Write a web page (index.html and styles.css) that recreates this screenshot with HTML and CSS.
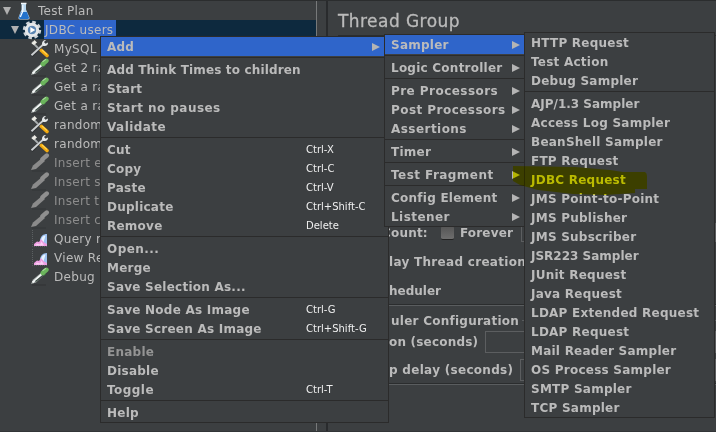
FILE: index.html
```
<!DOCTYPE html>
<html lang="en">
<head>
<meta charset="utf-8">
<title>Test Plan</title>
<link rel="stylesheet" href="styles.css">
</head>
<body>
<svg class="defs" width="0" height="0">
  <defs>
    <symbol id="tools" viewBox="0 0 20 19">
      <path d="M2 3l8 8" stroke="#a9adaf" stroke-width="1.800"/>
      <path d="M1.500 4.500L4.500 1l2.500 2.500-3 2.500z" fill="#ecebe4"/>
      <path d="M1.500 17L14 5" stroke="#2e3133" stroke-width="3"/>
      <path d="M1.500 16.200L14 4.800" stroke="#cdd0d2" stroke-width="1.900"/>
      <path d="M12.500 6.500c-1.500-3.500 1-5.500 3.500-5.500l-2 2 1.500 1.700 2.500-1.200c.3 3-2.500 4.500-5.500 3z" fill="#e6e8e9"/>
      <path d="M11.500 11.500l5.500 5" stroke="#f2a90e" stroke-width="3.600" stroke-linecap="round"/>
      <path d="M12 11l5 4.500" stroke="#ffd24d" stroke-width="1.200"/>
    </symbol>
    <symbol id="dropper" viewBox="0 0 20 19">
      <path d="M2 18h14" stroke="#303335" stroke-width="1"/>
      <path d="M1 17l2-4.500 9-7.500 2.500 2.500-8.500 8z" fill="#a3a9a8"/>
      <path d="M2.500 15.500l10-9" stroke="#f4f7f6" stroke-width="1.700"/>
      <path d="M5.500 14.500l8-6.500" stroke="#3a4a42" stroke-width="1.100"/>
      <path d="M11.500 4l3.500 4" stroke="#3a7c3c" stroke-width="2"/>
      <path d="M12.800 6L16.500 2.800" stroke="#6bb45c" stroke-width="4.400" stroke-linecap="round"/>
      <path d="M12.500 3.800l3.500-2.500" stroke="#a9d99b" stroke-width="1.100"/>
    </symbol>
    <symbol id="dropper-off" viewBox="0 0 20 19">
      <path d="M2 18h14" stroke="#333638" stroke-width="1"/>
      <path d="M1 17l2-4.500 9-7.500 3 3-9 8z" fill="#8b8b8b"/>
      <path d="M12.500 6.200L16.800 2.500" stroke="#8f8f8f" stroke-width="4.400" stroke-linecap="round"/>
    </symbol>
    <symbol id="chart" viewBox="0 0 20 19">
      <path d="M2.500 1v16.500H17" fill="none" stroke="#5c6062" stroke-dasharray="1 1"/>
      <path d="M10 11c1-4 3-6 7-6v11h-3c-1-2-2-3.500-4-5z" fill="#9cc0f0"/>
      <path d="M11 10.500c1-2.500 2.500-4 4.500-4l-2 7z" fill="#e9f3ff"/>
      <path d="M4 17v-2l3-2.500 2 .5 2-3 3 3.500 3 1.500v2z" fill="#ee9fe2"/>
      <path d="M5 16.500l2-2 3 1 1.500-3 2.500 4z" fill="#f9d0f3"/>
    </symbol>
    <symbol id="flask" viewBox="0 0 14 18">
      <path d="M4.500 1.500h4.500v6l3.500 8q.5 2-1.500 2H3q-2 0-1.500-2l3-8z" fill="#b5d5ee"/>
      <path d="M4 10h5.800l2.200 5.500q0 1.500-1.500 1.500h-7q-1.500 0-1.500-1.500z" fill="#2272cc"/>
      <path d="M4 1.500h5.500" stroke="#f4f8fb" stroke-width="1.500"/>
      <path d="M5.800 3v6l-2.500 6" fill="none" stroke="#f4faff" stroke-width="1.300"/>
    </symbol>
    <symbol id="gear" viewBox="0 0 20 20">
      <circle cx="10" cy="10" r="7.800" fill="none" stroke="#ccd2d7" stroke-width="2.800" stroke-dasharray="3.560 2.560"/>
      <circle cx="10" cy="10" r="5.700" fill="#7fa3c8" stroke="#e4e7e9" stroke-width="3"/>
      <circle cx="10" cy="10" r="4" fill="#5b86b3"/>
      <path d="M8.300 7l5 3-5 3z" fill="#fff"/>
    </symbol>
  </defs>
</svg>
<div class="app">
  <div class="tree">
    <div class="node root"><i class="down"></i><svg width="14" height="18"><use href="#flask"/></svg><span>Test Plan</span></div>
    <div class="node selected"><i class="down"></i><svg width="20" height="20"><use href="#gear"/></svg><span>JDBC users</span></div>
    <div class="node"><svg><use href="#tools"/></svg><span>MySQL C</span></div>
    <div class="node"><svg><use href="#dropper"/></svg><span>Get 2 ra</span></div>
    <div class="node"><svg><use href="#dropper"/></svg><span>Get a ra</span></div>
    <div class="node"><svg><use href="#dropper"/></svg><span>Get a ra</span></div>
    <div class="node"><svg><use href="#tools"/></svg><span>random</span></div>
    <div class="node"><svg><use href="#tools"/></svg><span>random</span></div>
    <div class="node off"><svg><use href="#dropper-off"/></svg><span>Insert e</span></div>
    <div class="node off"><svg><use href="#dropper-off"/></svg><span>Insert s</span></div>
    <div class="node off"><svg><use href="#dropper-off"/></svg><span>Insert t</span></div>
    <div class="node off"><svg><use href="#dropper-off"/></svg><span>Insert c</span></div>
    <div class="node"><svg><use href="#chart"/></svg><span>Query r</span></div>
    <div class="node"><svg><use href="#chart"/></svg><span>View Re</span></div>
    <div class="node"><svg><use href="#dropper"/></svg><span>Debug</span></div>
  </div>
  <div class="split"></div>
  <div class="editor">
    <h1>Thread Group</h1>
    <div class="form">
      <div class="line loops"><span>Count:</span><i class="check"></i><span>Forever</span><i class="field tall"></i></div>
      <div class="line delay"><span>lay Thread creation</span></div>
      <div class="line sched"><span>heduler</span></div>
      <div class="config">
        <div class="line legend"><span>uler Configuration</span><i class="rule"></i></div>
        <div class="line duration"><span>on (seconds)</span><i class="field"></i></div>
        <div class="line startup"><span>p delay (seconds)</span><i class="field"></i></div>
      </div>
    </div>
  </div>
</div>

<div class="menu context">
  <div class="item active">Add<i class="arrow"></i></div>
  <hr>
  <div class="item think">Add Think Times to children</div>
  <div class="item">Start</div>
  <div class="item wide">Start no pauses</div>
  <div class="item wide">Validate</div>
  <hr>
  <div class="item">Cut<kbd>Ctrl-X</kbd></div>
  <div class="item">Copy<kbd>Ctrl-C</kbd></div>
  <div class="item">Paste<kbd>Ctrl-V</kbd></div>
  <div class="item">Duplicate<kbd>Ctrl+Shift-C</kbd></div>
  <div class="item">Remove<kbd>Delete</kbd></div>
  <hr>
  <div class="item wide">Open...</div>
  <div class="item">Merge</div>
  <div class="item">Save Selection As...</div>
  <hr>
  <div class="item">Save Node As Image<kbd>Ctrl-G</kbd></div>
  <div class="item">Save Screen As Image<kbd>Ctrl+Shift-G</kbd></div>
  <hr>
  <div class="item disabled">Enable</div>
  <div class="item">Disable</div>
  <div class="item wide">Toggle<kbd>Ctrl-T</kbd></div>
  <hr>
  <div class="item">Help</div>
</div>

<div class="menu add">
  <div class="item active">Sampler<i class="arrow"></i></div>
  <hr>
  <div class="item">Logic Controller<i class="arrow"></i></div>
  <hr>
  <div class="item wide">Pre Processors<i class="arrow"></i></div>
  <div class="item wide">Post Processors<i class="arrow"></i></div>
  <div class="item wide">Assertions<i class="arrow"></i></div>
  <hr>
  <div class="item">Timer<i class="arrow"></i></div>
  <hr>
  <div class="item wide">Test Fragment<i class="arrow"></i></div>
  <hr>
  <div class="item">Config Element<i class="arrow"></i></div>
  <div class="item wide">Listener<i class="arrow"></i></div>
</div>

<div class="menu sampler">
  <div class="item">HTTP Request</div>
  <div class="item">Test Action</div>
  <div class="item">Debug Sampler</div>
  <hr>
  <div class="item narrow">AJP/1.3 Sampler</div>
  <div class="item">Access Log Sampler</div>
  <div class="item">BeanShell Sampler</div>
  <div class="item">FTP Request</div>
  <div class="item">JDBC Request</div>
  <div class="item">JMS Point-to-Point</div>
  <div class="item">JMS Publisher</div>
  <div class="item">JMS Subscriber</div>
  <div class="item narrow">JSR223 Sampler</div>
  <div class="item">JUnit Request</div>
  <div class="item">Java Request</div>
  <div class="item">LDAP Extended Request</div>
  <div class="item">LDAP Request</div>
  <div class="item">Mail Reader Sampler</div>
  <div class="item">OS Process Sampler</div>
  <div class="item">SMTP Sampler</div>
  <div class="item">TCP Sampler</div>
</div>
<svg class="marker" width="134" height="31" viewBox="0 0 134 31"><path d="M0 1L62 2 97 5 110 7 132 7Q134 8 134 11V24H122V28L92 30 60 29 25 25 7 20 0 16z" fill="#ff0"/></svg>
</body>
</html>
```
FILE: styles.css
```
body {
  margin: 0;
  width: 716px;
  height: 432px;
  overflow: hidden;
  position: relative;
  background: #3c3f41;
  color: #bbb;
  font: 12px "DejaVu Sans", sans-serif;
}
.defs { position: absolute; }
.app {
  box-sizing: border-box;
  display: flex;
  height: 432px;
  border-top: 1px solid #2b2d2e;
  border-bottom: 1px solid #323537;
}
.tree {
  width: 316px;
  overflow: hidden;
  border-right: 1px solid #77797a;
}
.node {
  display: flex;
  align-items: center;
  height: 19px;
  padding-left: 30px;
  white-space: pre;
  letter-spacing: 0.3px;
}
.node svg { width: 20px; height: 19px; flex: none; }
.node span { margin-left: 4px; padding-top: 2px; line-height: 17px; }
.node.root { padding-left: 3px; }
.node.root svg { width: 14px; height: 18px; margin-left: 6px; }
.node.root span { margin-left: 7px; }
.node.selected { padding-left: 11px; background: #0d293e; }
.node.selected svg { margin-left: 3px; height: 20px; }
.node.selected span { margin-left: 2px; padding-left: 1px; padding-right: 3px; background: #2f65ca; }
.node.off { color: #8c8c8c; }
.down {
  border: 4.5px solid transparent;
  border-top: 8px solid #b0b0b0;
  border-bottom: 0;
}
.split { width: 9px; border-right: 2px solid #292b2d; }
.editor { flex: 1; min-width: 0; padding: 9px 0 0 10px; }
h1 {
  margin: 0;
  height: 25px;
  font: 17px/22px "DejaVu Sans", sans-serif;
  -webkit-text-stroke: 0.3px #bbb;
  letter-spacing: 0.45px;
  border-bottom: 1px solid #2b2d2e;
}
.form {
  padding: 187px 0 0 51px;
  font-weight: bold;
  letter-spacing: 0.2px;
}
.line { display: flex; align-items: center; height: 19px; white-space: nowrap; }
.loops { margin-left: -7px; }
.loops .check { width: 13px; height: 13px; margin: 0 6px 0 13px; border-radius: 2px; background: linear-gradient(#555, #6e6e6e); border-bottom: 1px solid #222; }
.field { height: 20px; flex: 1; border: 1px solid #5c5e60; }
.loops .field { margin-left: 8px; height: 17px; }
.delay { margin-top: 10px; letter-spacing: 0.3px; }
.sched { margin-top: 10px; letter-spacing: 0; }
.config { margin-top: 5px; height: 78px; border-top: 1px solid #5a5d5f; border-bottom: 1px solid #5a5d5f; box-shadow: 0 -1px #2b2d2e, inset 0 -1px #2b2d2e; }
.legend { margin-top: 5px; margin-left: 2px; letter-spacing: 0.25px; }
.rule { flex: 1; margin-left: 3px; border-top: 1px solid #5a5d5f; }
.duration { margin-top: 1px; height: 22px; }
.startup { margin-top: 6px; height: 22px; letter-spacing: 0.3px; }
.config .field { margin-left: 7px; }
.menu {
  position: absolute;
  box-sizing: border-box;
  border: 1px solid #2b2b2b;
  background: #3c3f41;
  font-weight: bold;
  letter-spacing: 0.24px;
}
.context { left: 100px; top: 36px; width: 289px; }
.add { left: 384px; top: 34px; width: 141px; }
.sampler { left: 524px; top: 32px; width: 191px; }
.item {
  box-sizing: border-box;
  display: flex;
  align-items: center;
  height: 19px;
  padding: 2px 4px 0 6px;
  line-height: 17px;
  white-space: nowrap;
}
.context .item { padding-right: 8px; }
.item.active { background: #2f65ca; }
.item.disabled { color: #949494; }
.item.think { letter-spacing: 0.15px; }
.item.wide { letter-spacing: 0.45px; }
.item.narrow { letter-spacing: 0; }
hr { height: 1px; margin: 1px 0 2px; border: 0; background: #2b2b2b; }
.arrow {
  margin: 0 0 2px auto;
  border: 4px solid transparent;
  border-left: 8px solid #b4b4b4;
  border-right: 0;
}
kbd {
  width: 74px;
  margin: 0 0 2px auto;
  color: #f0f0f0;
  font: 10px/17px "DejaVu Sans", sans-serif;
  letter-spacing: 0;
}
.marker { position: absolute; left: 513px; top: 165px; mix-blend-mode: multiply; }
```
